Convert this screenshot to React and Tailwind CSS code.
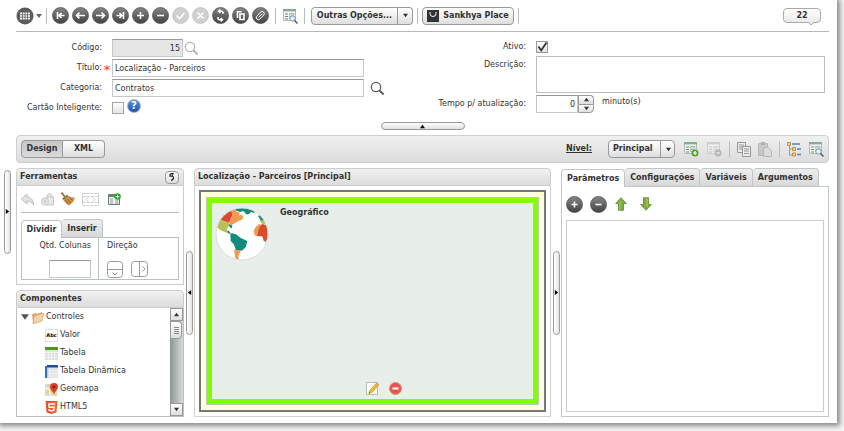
import React from 'react';
import clsx from 'clsx';

const toolbarActions = [
  { name: "Primeiro", d: "M5.5 5v7M7 8.5h5.5M9.5 6L7 8.5 9.5 11" },
  { name: "Anterior", d: "M4.5 8.5h8.5M7.5 5.7L4.5 8.5l3 2.8" },
  { name: "Próximo", d: "M4 8.5h8.5M9.5 5.7l3 2.8-3 2.8" },
  { name: "Último", d: "M11.5 5v7M4.5 8.5h5.5M7.5 6L10 8.5 7.5 11" },
  { name: "Adicionar", d: "M8.5 5v7M5 8.5h7" },
  { name: "Remover", d: "M5 8.5h7" },
  { name: "Salvar", d: "M4.5 8.5l3 3L12.5 6", disabled: true },
  { name: "Cancelar", d: "M5.5 5.5l6 6M11.5 5.5l-6 6", disabled: true },
  { name: "Atualizar", d: "M11 6.8V5.500a1.500 1.500 0 0 0-1.500-1.300H6.500M8.300 2.500L6.500 4.200l1.800 1.700M6 10v1.500a1.500 1.500 0 0 0 1.500 1.300h3M8.700 11.100l1.800 1.700-1.800 1.700" },
  { name: "Duplicar", d: "M5.5 11V4.7h4M8 7h4v5.5H8z" },
  { name: "Anexar", d: "M6.500 10.500l3.700-4M5 9l3.500-3.800a2.100 2.100 0 0 1 3.200 2.800l-3.900 4.200a2.100 2.100 0 0 1-3.100-2.800z", thin: true }
];

const components = [
  { name: "Valor", icon: "value" },
  { name: "Tabela", icon: "table" },
  { name: "Tabela Dinâmica", icon: "pivot" },
  { name: "Geomapa", icon: "map" },
  { name: "HTML5", icon: "html5" }
];

const tabs = ["Parâmetros", "Configurações", "Variáveis", "Argumentos"];

const RoundIcon = ({ d, disabled, thin }) => (
  <svg width="17" height="17" viewBox="0 0 17 17" fill="none">
    <defs>
      <linearGradient id="round-dark" x1="0" y1="0" x2="0" y2="1">
        <stop offset="0" stopColor="#858585" />
        <stop offset="1" stopColor="#434343" />
      </linearGradient>
    </defs>
    <circle cx="8.5" cy="8.5" r="8" fill={disabled ? "#cfcfcf" : "url(#round-dark)"} stroke={disabled ? "#c2c2c2" : "#555"} strokeWidth="0.8" />
    <path d={d} stroke="#fff" strokeWidth={thin ? 1 : 1.6} />
  </svg>
);

const Triangle = ({ dir = "down", size = 5, className }) => {
  const points = { down: "0,1 6,1 3,5", up: "0,5 6,5 3,1", left: "5,0 5,6 1,3", right: "1,0 1,6 5,3" };
  return (
    <svg width={size} height={size} viewBox="0 0 6 6" className={clsx("shrink-0", className)} fill="currentColor">
      <polygon points={points[dir]} />
    </svg>
  );
};

const SearchIcon = ({ color }) => (
  <svg width="15" height="15" viewBox="0 0 15 15" fill="none" stroke={color}>
    <circle cx="6" cy="6" r="4.7" strokeWidth="1.3" />
    <path d="M9.3 9.3l4.4 4.2" strokeWidth="2" />
  </svg>
);

const FormIcon = ({ badge, faded }) => (
  <svg width="16" height="16" viewBox="0 0 16 16" fill="none" className={faded ? "opacity-60" : ""}>
    <path d="M1.5 1.5h12v11h-12z" fill="#f4f6f4" stroke="#b3bdb5" />
    <path d="M1 1h13v2.4H1z" fill={faded ? "#bbb" : "#86ab92"} />
    <path d="M3 6h3M3 8.5h3M3 11h3" stroke={faded ? "#aaa" : "#71877a"} />
    <path d="M7.5 5.5h4.5v1.5h-4.5zM7.5 8.5h4.5v2h-4.5z" fill="#fff" stroke={faded ? "#bbb" : "#93a89b"} strokeWidth="0.8" />
    {badge === "add" && (
      <g>
        <circle cx="12" cy="12" r="3.5" fill="#54a52b" />
        <path d="M12 10v4M10 12h4" stroke="#fff" strokeWidth="1.2" />
      </g>
    )}
    {badge === "remove" && (
      <g>
        <circle cx="12" cy="12" r="3.5" fill="#999" />
        <path d="M10.2 12h3.6" stroke="#fff" strokeWidth="1.2" />
      </g>
    )}
    {badge === "search" && (
      <g>
        <circle cx="10.5" cy="10.5" r="2.7" fill="#e8f1fa" stroke="#7b93b5" />
        <path d="M12.5 12.5l3 3" stroke="#555" strokeWidth="1.4" />
      </g>
    )}
  </svg>
);

const ComponentIcon = ({ type }) => {
  if (type === "value") {
    return (
      <span className="flex h-[13px] w-[13px] shrink-0 items-center justify-center border border-[#ddd] bg-white text-[5px] font-bold text-black">Abc</span>
    );
  }
  return (
    <svg width="13" height="13" viewBox="0 0 13 13" className="shrink-0">
      {type === "table" && (
        <g>
          <path d="M0 0h13v13H0z" fill="#dcdcdc" />
          <path d="M0 5.5h13M0 8h13M0 10.5h13M3.3 3v10M6.5 3v10M9.7 3v10" stroke="#fff" strokeWidth="0.6" />
          <path d="M0 0h13v3H0z" fill="#489b1d" />
        </g>
      )}
      {type === "pivot" && (
        <g>
          <path d="M1 1h12v12H1z" fill="#dcdcdc" />
          <path d="M2 6h11M2 8.5h11M2 11h11M5 3v10M8 3v10M11 3v10" stroke="#fff" strokeWidth="0.6" />
          <path d="M2 0h11v2.5H2z" fill="#1d4f97" />
          <path d="M0 1h2.2v12H0z" fill="#2f72bd" />
        </g>
      )}
      {type === "map" && (
        <g>
          <path d="M0 1h12v12H0z" fill="#d9d9d5" />
          <path d="M0 11l5-4 7 6M4 1l2 6" stroke="#f0d64a" strokeWidth="1.6" fill="none" />
          <path d="M0 5l4 1 2 7" stroke="#fff" fill="none" />
          <path d="M9 11C7.5 8 5 6.5 5 4a4 4 0 0 1 8 0c0 2.5-2.5 4-4 7z" fill="#dd3d30" />
          <circle cx="9" cy="4" r="1.5" fill="#8d211b" />
        </g>
      )}
      {type === "html5" && (
        <g>
          <path d="M.5 0h12l-1.1 11.5L6.5 13l-4.9-1.5z" fill="#e5532d" />
          <path d="M6.5 1h5l-.9 9.7-4.1 1.3z" fill="#f0703f" />
          <path d="M9.8 3H3.8l.3 3.2h5l-.3 3-2.3.7-2.3-.7-.1-1.2" stroke="#fff" strokeWidth="1.4" fill="none" />
        </g>
      )}
    </svg>
  );
};

const Globe = () => (
  <svg width="54" height="54" viewBox="0 0 54 54" className="shrink-0">
    <defs>
      <clipPath id="globe-clip"><circle cx="27" cy="27" r="26" /></clipPath>
    </defs>
    <circle cx="27" cy="27" r="26" fill="#fff" />
    <g clipPath="url(#globe-clip)">
      <path d="M5 13L8 6l7.700-5 1.800 7-3.500 7.700z" fill="#d94b2b" />
      <path d="M5.500 12.500l8.500 3.200 1 2-2.500 3-1 2.500 2 2.500 3 .500v1.500l-6-2.500-5-2-5-4z" fill="#b9bf5b" />
      <path d="M15.700 1.500h5.500l.500 3.500 3 .500-1 3 3-1 1.500 2.500-1 2.500-4 1.500-3 2-4 2-2.200-2.300 3.500-7.700z" fill="#f19a54" />
      <path d="M21 0h13l6 3-1 3-3-1-2 2-2.500.500-3-3.500-3.500 1-4-1.500z" fill="#128b7d" />
      <path d="M14 17l3.500 1.500-1 3-2-1.500zM11.500 23.500l2.500.500 2 2.700-2.500-.500z" fill="#128b7d" />
      <path d="M15.300 27.300l2-1 4 1.200 4.500 3.500 6.500 3-1.500 6-3.500 3.500H21l-2-6-3.300-3.500z" fill="#128b7d" />
      <path d="M19 42.500l7 1-2.200 4.500-.500 2 1 3-4-1.500z" fill="#f19a54" />
      <path d="M44.500 13.500l5-2 3 5-5 .700z" fill="#b9bf5b" />
      <path d="M43 9l4-1.500 2.500 4.500-2 1.500-2-.500z" fill="#128b7d" />
      <path d="M38.700 24l2-4 3-2.800 5 .500-4.500 4-.700 7.600-3.800-.800z" fill="#f19a54" />
      <path d="M44.500 20l3-3 6 2v11l-3 5-2-1.500-1-4-5.500-.500z" fill="#d94b2b" />
    </g>
    <circle cx="27" cy="27" r="26" fill="none" stroke="#dadedb" />
  </svg>
);

const Separator = ({ className }) => <span className={clsx("h-4 w-px bg-[#b6bebe]", className)} />;

const Handle = ({ dir }) => (
  <button aria-label="Recolher painel" className="flex h-[84px] w-[7px] shrink-0 items-center justify-center rounded-full border border-[#999] bg-linear-to-r from-white to-[#e4e4e4] text-black">
    <Triangle dir={dir} />
  </button>
);

const PanelHeader = ({ title, children }) => (
  <div className="flex h-[18px] shrink-0 items-center justify-between rounded-t border border-[#c9cdcd] bg-linear-to-b from-[#f1f1f1] to-[#dcdcdc] pl-[3px] pr-1">
    <h2 className="font-bold">{title}</h2>
    {children}
  </div>
);

const buttonStyle = "border border-[#999] bg-linear-to-b from-white to-[#dedede] font-bold";
const inputStyle = "border border-[#c4c8c8] border-t-[#999] bg-white px-0.5 outline-none";

const Toolbar = () => (
  <header className="flex h-8 items-center border-b border-[#b3baba]">
    <button aria-label="Modo grade" className="flex items-center gap-0.5 text-[#666]">
      <svg width="18" height="18" viewBox="0 0 18 18">
        <circle cx="9" cy="9" r="8.5" fill="#5c5c5c" />
        <path d="M4 5.5h10v7H4z" fill="#fff" />
        <path d="M4 7.8h10M4 10.2h10M6.5 5v8M9 5v8M11.5 5v8" stroke="#5c5c5c" strokeWidth="0.8" />
      </svg>
      <Triangle size={6} />
    </button>
    <Separator className="mx-1" />
    <div className="ml-px flex gap-[3px]">
      {toolbarActions.map((action) => (
        <button key={action.name} aria-label={action.name} disabled={action.disabled}>
          <RoundIcon d={action.d} disabled={action.disabled} thin={action.thin} />
        </button>
      ))}
    </div>
    <Separator className="mx-1.5" />
    <button aria-label="Pesquisar formulário"><FormIcon badge="search" /></button>
    <Separator className="mx-1.5" />
    <div className="flex h-[18px]">
      <button className={clsx(buttonStyle, "w-[87px] rounded-l whitespace-nowrap text-center")}>Outras Opções...</button>
      <button aria-label="Mais opções" className={clsx(buttonStyle, "flex w-[15px] items-center justify-center rounded-r border-l-0")}>
        <Triangle />
      </button>
    </div>
    <Separator className="mx-1" />
    <button className={clsx(buttonStyle, "flex h-[18px] w-[92px] items-center justify-center gap-1 whitespace-nowrap rounded")}>
      <svg width="12" height="12" viewBox="0 0 12 12">
        <path d="M0 0h12v12H0z" fill="#333" />
        <path d="M3 2v1.5a3 3 0 0 0 6 0V2" stroke="#fff" fill="none" />
      </svg>
      Sankhya Place
    </button>
    <Separator className="mx-1" />
    <div className="relative mr-2 ml-auto flex h-[15px] w-[38px] items-center justify-center rounded border border-[#aaa] bg-linear-to-b from-white to-[#e9e9e9] font-bold">
      22
      <svg width="6" height="4" viewBox="0 0 6 4" className="absolute top-[13px] right-1.5">
        <path d="M0 0l3 3 3-3" fill="#e9e9e9" stroke="#aaa" />
      </svg>
    </div>
  </header>
);

const FormFields = () => (
  <form className="flex pt-1.5 pr-1">
    <div className="w-[384px] shrink-0">
      <div className="flex h-5 items-center">
        <label htmlFor="codigo" className="w-[86px] text-right">Código:</label>
        <input id="codigo" defaultValue="15" readOnly className="ml-2.5 h-[18px] w-[71px] border border-[#c4c8c8] border-t-[#999] bg-[#e6e6e6] px-0.5 text-right outline-none" />
        <button type="button" aria-label="Buscar código" className="ml-px"><SearchIcon color="#b5b5b5" /></button>
      </div>
      <div className="flex h-5 items-center">
        <label htmlFor="titulo" className="w-[86px] text-right">Título:</label>
        <span className="w-2.5 pt-1 text-center text-[13px] leading-3 text-red-500">*</span>
        <input id="titulo" defaultValue="Localização - Parceiros" className={clsx(inputStyle, "h-[18px] w-[252px]")} />
      </div>
      <div className="flex h-5 items-center">
        <label htmlFor="categoria" className="w-[86px] text-right">Categoria:</label>
        <input id="categoria" defaultValue="Contratos" className={clsx(inputStyle, "ml-2.5 h-[18px] w-[252px]")} />
        <button type="button" aria-label="Buscar categoria" className="ml-1.5"><SearchIcon color="#606060" /></button>
      </div>
      <div className="flex h-5 items-center">
        <label htmlFor="cartao" className="w-[86px] text-right whitespace-nowrap">Cartão Inteligente:</label>
        <input id="cartao" type="checkbox" className="ml-2.5 h-3 w-3 appearance-none border border-[#a5a5a5] bg-linear-to-b from-white to-[#e4e4e4]" />
        <button type="button" aria-label="Ajuda" className="mb-1 ml-[3px] flex h-3.5 w-3.5 items-center justify-center rounded-full border border-[#9bb4dc] bg-linear-to-b from-[#5a93de] to-[#1c54ac] text-[10px] font-bold text-white">?</button>
      </div>
    </div>

    <div className="flex-1">
      <div className="flex h-[18px] items-center">
        <label htmlFor="ativo" className="w-[126px] text-right">Ativo:</label>
        <span className="relative ml-2.5 flex">
          <input id="ativo" type="checkbox" defaultChecked className="peer h-3 w-3 appearance-none border border-[#999] bg-linear-to-b from-white to-[#e4e4e4]" />
          <svg width="12" height="12" viewBox="0 0 12 12" className="pointer-events-none absolute inset-0 hidden peer-checked:block">
            <path d="M2.5 5.5l2.7 4L10.5 1.5" stroke="#333" strokeWidth="1.8" fill="none" />
          </svg>
        </span>
      </div>
      <div className="flex h-[38px]">
        <label htmlFor="descricao" className="w-[126px] pt-[3px] text-right">Descrição:</label>
        <textarea id="descricao" className="ml-2.5 h-[37px] flex-1 resize-none border border-[#b9bebe] bg-white outline-none" />
      </div>
      <div className="flex h-5 items-center">
        <label htmlFor="tempo" className="w-[126px] text-right">Tempo p/ atualização:</label>
        <input id="tempo" defaultValue="0" className="ml-2.5 h-[18px] w-[42px] border border-[#c4c8c8] border-t-[#999] bg-white px-0.5 text-right outline-none" />
        <div className="flex h-[18px] w-4 flex-col">
          <button type="button" aria-label="Aumentar" className={clsx(buttonStyle, "flex flex-1 items-center justify-center rounded-tr border-b-0")}><Triangle dir="up" /></button>
          <button type="button" aria-label="Diminuir" className={clsx(buttonStyle, "flex flex-1 items-center justify-center rounded-br")}><Triangle /></button>
        </div>
        <span className="ml-2 pb-1">minuto(s)</span>
      </div>
    </div>
  </form>
);

const DesignBar = () => (
  <div className="flex h-7 shrink-0 items-center rounded border border-[#cfcfcf] bg-linear-to-b from-[#f0f0f0] to-[#dcdcdc] pr-1 pl-1">
    <button className="h-[18px] w-[42px] rounded-l border border-[#999] bg-linear-to-b from-[#c6c6c6] to-[#dadada] font-bold">Design</button>
    <button className={clsx(buttonStyle, "h-[18px] w-[42px] rounded-r border-l-0")}>XML</button>
    <label htmlFor="nivel" className="mr-4 ml-auto font-bold underline">Nível:</label>
    <div className="relative flex">
      <select id="nivel" className={clsx(buttonStyle, "h-[18px] w-[67px] appearance-none rounded pl-1 outline-none")}>
        <option>Principal</option>
      </select>
      <span className="pointer-events-none absolute inset-y-0 right-0 flex w-[15px] items-center justify-center border-l border-[#999]"><Triangle /></span>
    </div>
    <div className="ml-2 flex items-center gap-[7px]">
      <button aria-label="Adicionar nível"><FormIcon badge="add" /></button>
      <button aria-label="Remover nível" disabled><FormIcon badge="remove" faded /></button>
      <Separator />
      <button aria-label="Copiar">
        <svg width="14" height="15" viewBox="0 0 14 15" fill="#eee" stroke="#969696">
          <path d="M.5.5h8v10h-8z" />
          <path d="M2 3h5M2 5h5M2 7h3" />
          <path d="M5.5 4.5h8v10h-8z" />
          <path d="M7 7h5M7 9h5M7 11.5h5" />
        </svg>
      </button>
      <button aria-label="Colar" disabled className="opacity-70">
        <svg width="14" height="15" viewBox="0 0 14 15">
          <path d="M.5 1.5h9v12h-9z" fill="#bcbcbc" stroke="#a5a5a5" />
          <path d="M3 0h4v3H3z" fill="#999" />
          <path d="M5.5 5.5h5l3 3v6h-8z" fill="#d9d9d9" stroke="#a5a5a5" />
        </svg>
      </button>
      <Separator />
      <button aria-label="Árvore">
        <svg width="14" height="15" viewBox="0 0 14 15" fill="none">
          <path d="M2.5 4v9h4M2.5 7h4" stroke="#999" />
          <path d="M.5.5h3v3h-3zM5.5 5.5h3v3h-3zM5.5 11h3v3h-3z" fill="#f3d48a" stroke="#b8923f" />
          <path d="M5 2h8M10 7h4M10 12.5h4" stroke="#5784b8" strokeWidth="1.3" />
        </svg>
      </button>
      <button aria-label="Pesquisar"><FormIcon badge="search" /></button>
    </div>
  </div>
);

const ToolsPanel = () => (
  <section className="flex h-[117px] shrink-0 flex-col">
    <PanelHeader title="Ferramentas">
      <button aria-label="Restaurar" className={clsx(buttonStyle, "flex h-[13px] w-[14px] items-center justify-center rounded")}>
        <svg width="6" height="8" viewBox="0 0 6 8" fill="none" stroke="#222">
          <path d="M4.800.700H2.200L1 1.500v1.700h2.500a1.500 1.500 0 0 1 1 1.500C4.500 6.300 3.500 7 2 7.300" strokeWidth="1.200" />
          <path d="M3.500.300v3" strokeWidth="0.800" />
        </svg>
      </button>
    </PanelHeader>
    <div className="flex-1 border border-t-0 border-[#c9cdcd] px-1">
      <div className="flex h-[27px] items-center gap-[7px] border-b border-[#b9c1c1]">
        <button aria-label="Desfazer" disabled>
          <svg width="13" height="13" viewBox="0 0 13 13">
            <path d="M.5 6L6 1v3c4 0 6.5 3 6.500 8C11 9.500 9 8 6 8v3z" fill="#e4e4e4" stroke="#bcbcbc" />
          </svg>
        </button>
        <button aria-label="Excluir" disabled>
          <svg width="13" height="13" viewBox="0 0 13 13" fill="#e8e8e8" stroke="#c8c8c8">
            <path d="M5 4h7.5v8H5zM6 4l1-3h3l1.5 3" />
            <circle cx="4" cy="8.5" r="3.5" />
            <circle cx="4" cy="8.5" r="1" />
          </svg>
        </button>
        <button aria-label="Limpar">
          <svg width="14" height="14" viewBox="0 0 14 14">
            <path d="M.5.5L4 5" stroke="#9a6433" strokeWidth="1.6" />
            <path d="M1 6.500L6 2.500l2.500 2.500L3.500 9z" fill="#7c8a56" />
            <path d="M2.500 8L7.500 4c2 1.500 4 1.500 6.500 1.500-1 3.500-3 6.500-6 8-2-1-4.500-3-5.500-5.500z" fill="#cf9049" />
            <path d="M4.500 8l3 4M6.500 7l3 4M8.500 5.500l3 3" stroke="#905d2a" strokeWidth="0.9" />
          </svg>
        </button>
        <button aria-label="Ajustar largura" disabled>
          <svg width="17" height="13" viewBox="0 0 17 13" fill="none" stroke="#cccccc">
            <path d="M.5.5h16v3H.5zM.5 9.5h16v3H.5z" strokeDasharray="3 1" />
            <path d="M.5 3v7M16.5 3v7M6 4.5L4 6.5l2 2M11 4.5l2 2-2 2" />
          </svg>
        </button>
        <button aria-label="Novo painel" className="ml-0.5">
          <svg width="13" height="13" viewBox="0 0 13 13">
            <path d="M.5 1.5h11v10H.5z" fill="#f1f5f1" stroke="#6d7a70" />
            <path d="M1 2h10v2H1z" fill="#6c8572" />
            <path d="M2 6h3M2 8h3M2 10h3M7 8h3.5M7 10h3.5" stroke="#8a998e" />
            <circle cx="9.500" cy="3.500" r="3.300" fill="#27a52c" />
            <path d="M9.500 1.700v3.600M7.700 3.500h3.600" stroke="#fff" />
          </svg>
        </button>
      </div>
      <div className="mt-1.5 flex h-[18px] items-end" role="tablist">
        <button role="tab" aria-selected="true" className="relative z-10 -mb-px h-[18px] w-[41px] rounded-t border border-b-0 border-[#c0c6c6] bg-white font-bold">Dividir</button>
        <button role="tab" aria-selected="false" className="h-[18px] w-[41px] rounded-t border border-b-0 border-l-0 border-[#c0c6c6] bg-linear-to-b from-[#eee] to-[#d8d8d8] font-bold">Inserir</button>
      </div>
      <div className="flex h-[43px] border border-[#b9c1c1]">
        <div className="flex w-[77px] flex-col items-end justify-between border-r border-[#b9c1c1] pt-0.5 pr-[7px] pb-px">
          <label htmlFor="colunas" className="whitespace-nowrap">Qtd. Colunas</label>
          <input id="colunas" className={clsx(inputStyle, "h-[18px] w-[42px]")} />
        </div>
        <div className="flex flex-1 flex-col justify-between pt-0.5 pb-px pl-2">
          <span>Direção</span>
          <div className="flex gap-[7px]">
            <button aria-label="Dividir na horizontal">
              <svg width="17" height="17" viewBox="0 0 17 17" fill="none" stroke="#999">
                <rect x=".5" y=".5" width="15" height="16" rx="3" />
                <path d="M1 8.5h15M5.5 11.5l2.5 2.5 2.5-2.5" />
              </svg>
            </button>
            <button aria-label="Dividir na vertical">
              <svg width="17" height="17" viewBox="0 0 17 17" fill="none" stroke="#999">
                <rect x=".5" y=".5" width="16" height="15" rx="3" />
                <path d="M8.5 1v15M11.5 5.5L14 8l-2.5 2.5" />
              </svg>
            </button>
          </div>
        </div>
      </div>
    </div>
  </section>
);

const ComponentsPanel = () => (
  <section className="mt-[5px] flex flex-1 flex-col">
    <PanelHeader title="Componentes" />
    <div className="flex flex-1 border border-t-0 border-[#b9c1c1]">
      <ul className="flex flex-1 flex-col">
        <li className="flex h-[18px] items-center gap-0.5 pl-1 text-[#555]">
          <Triangle size={8} />
          <svg width="13" height="13" viewBox="0 0 13 13">
            <path d="M1 3l4-1 1 1 5-2v8L2 12z" fill="#d9a871" />
            <path d="M3 5l10-3-2 8-9 3z" fill="#f4d3a8" stroke="#cc9b66" strokeWidth="0.6" />
          </svg>
          <span className="text-[#333]">Controles</span>
        </li>
        {components.map((component) => (
          <li key={component.name} className="flex h-[18px] items-center gap-0.5 pl-7">
            <ComponentIcon type={component.icon} />
            <span>{component.name}</span>
          </li>
        ))}
      </ul>
      <div className="flex w-[13px] flex-col bg-linear-to-r from-[#8f9696] to-[#d6dada]">
        <button aria-label="Rolar para cima" className={clsx(buttonStyle, "flex h-[13px] items-center justify-center")}><Triangle dir="up" /></button>
        <span className={clsx(buttonStyle, "flex h-[18px] w-3 flex-col items-center justify-center gap-px rounded-r")}>
          <i className="h-px w-[5px] bg-[#888]" />
          <i className="h-px w-[5px] bg-[#888]" />
          <i className="h-px w-[5px] bg-[#888]" />
          <i className="h-px w-[5px] bg-[#888]" />
        </span>
        <button aria-label="Rolar para baixo" className={clsx(buttonStyle, "mt-auto flex h-[13px] items-center justify-center")}><Triangle /></button>
      </div>
    </div>
  </section>
);

const Canvas = () => (
  <section className="flex flex-1 flex-col">
    <PanelHeader title="Localização - Parceiros [Principal]" />
    <div className="flex flex-1 border border-t-0 border-[#cfd3d3] p-1">
      <div className="flex flex-1 border-2 border-[#777] bg-[#ffffdf] p-[5px]">
        <div className="flex flex-1 border border-[#c2c8bc]">
          <div className="flex flex-1 flex-col justify-between border-[5px] border-[#80ff00] bg-[#e8efea] py-1 pl-[3px]">
            <div className="flex gap-[11px]">
              <Globe />
              <h3 className="font-bold">Geográfico</h3>
            </div>
            <div className="flex justify-center gap-2.5 pl-5">
              <button aria-label="Editar">
                <svg width="13" height="13" viewBox="0 0 13 13">
                  <path d="M.5.5h11v12H.5z" fill="#fff" stroke="#b5bab8" />
                  <path d="M3.5 8.5l6.500-7 2.500 2-6.500 7-3.200 1z" fill="#edb93d" stroke="#c28d28" strokeWidth="0.6" />
                  <path d="M10 1.5l1-1 2 1.7-.7 1.3z" fill="#e58c6d" />
                  <path d="M2.8 11.5l.4-1.5 1 .9z" fill="#444" />
                </svg>
              </button>
              <button aria-label="Remover">
                <svg width="13" height="13" viewBox="0 0 13 13">
                  <circle cx="6.5" cy="6.5" r="6" fill="#e8574f" stroke="#d98a85" />
                  <path d="M3.5 5.5h6v2h-6z" fill="#fff" />
                </svg>
              </button>
            </div>
          </div>
        </div>
      </div>
    </div>
  </section>
);

const GreenArrow = ({ up }) => (
  <svg width="12" height="14" viewBox="0 0 12 14" className={up ? "" : "rotate-180"}>
    <path d="M6 .7L11.3 6.5H8.5v6.8h-5V6.5H.7z" fill="#7faa3f" stroke="#5d8a2d" strokeWidth="0.8" />
    <path d="M5 4v8.5" stroke="#b0cf7c" />
  </svg>
);

const Parameters = () => (
  <section className="flex w-[268px] shrink-0 flex-col">
    <div className="flex h-[18px] items-end" role="tablist">
      {tabs.map((tab, index) => (
        <button
          key={tab}
          role="tab"
          aria-selected={index === 0}
          className={clsx(
            "h-[18px] rounded-t border border-b-0 border-[#c0c6c6] px-[5px] font-bold",
            index === 0 ? "relative z-10 -mb-px bg-white" : "border-l-0 bg-linear-to-b from-[#eee] to-[#d8d8d8]"
          )}
        >
          {tab}
        </button>
      ))}
    </div>
    <div className="flex flex-1 flex-col border border-[#c0c8c8] p-1">
      <div className="mt-0.5 flex h-[22px] items-center gap-[7px]">
        <button aria-label="Adicionar parâmetro"><RoundIcon d="M8.5 5.5v6M5.5 8.5h6" /></button>
        <button aria-label="Remover parâmetro"><RoundIcon d="M5.5 8.5h6" /></button>
        <button aria-label="Mover para cima" className="ml-px"><GreenArrow up /></button>
        <button aria-label="Mover para baixo" className="ml-1.5"><GreenArrow /></button>
      </div>
      <div className="mt-[5px] flex-1 border border-[#c9cdcd]" />
    </div>
  </section>
);

const App = () => {
  return (
    <div className="flex min-h-screen bg-[#f5f5f5] pr-[7px] pb-2 font-['DejaVu_Sans',sans-serif] text-[8px] leading-[12px] text-[#333]">
      <div className="flex flex-1 bg-white shadow-[1px_1px_5px_2px_#8a8a8a]">
        <aside className="flex w-4 shrink-0 items-center pl-1">
          <Handle dir="right" />
        </aside>
        <main className="flex flex-1 flex-col pr-2 pb-1.5">
          <Toolbar />
          <FormFields />
          <button aria-label="Recolher formulário" className="mx-auto mt-1 mb-[5px] flex h-2 w-[84px] items-center justify-center rounded-full border border-[#999] bg-linear-to-b from-white to-[#e0e0e0] text-black">
            <Triangle dir="up" />
          </button>
          <DesignBar />
          <div className="mt-[5px] flex flex-1">
            <div className="flex w-[168px] shrink-0 flex-col">
              <ToolsPanel />
              <ComponentsPanel />
            </div>
            <div className="flex w-2.5 shrink-0 items-center justify-center"><Handle dir="left" /></div>
            <Canvas />
            <div className="flex w-2.5 shrink-0 items-center justify-center"><Handle dir="right" /></div>
            <Parameters />
          </div>
        </main>
      </div>
    </div>
  );
};

export default App;
